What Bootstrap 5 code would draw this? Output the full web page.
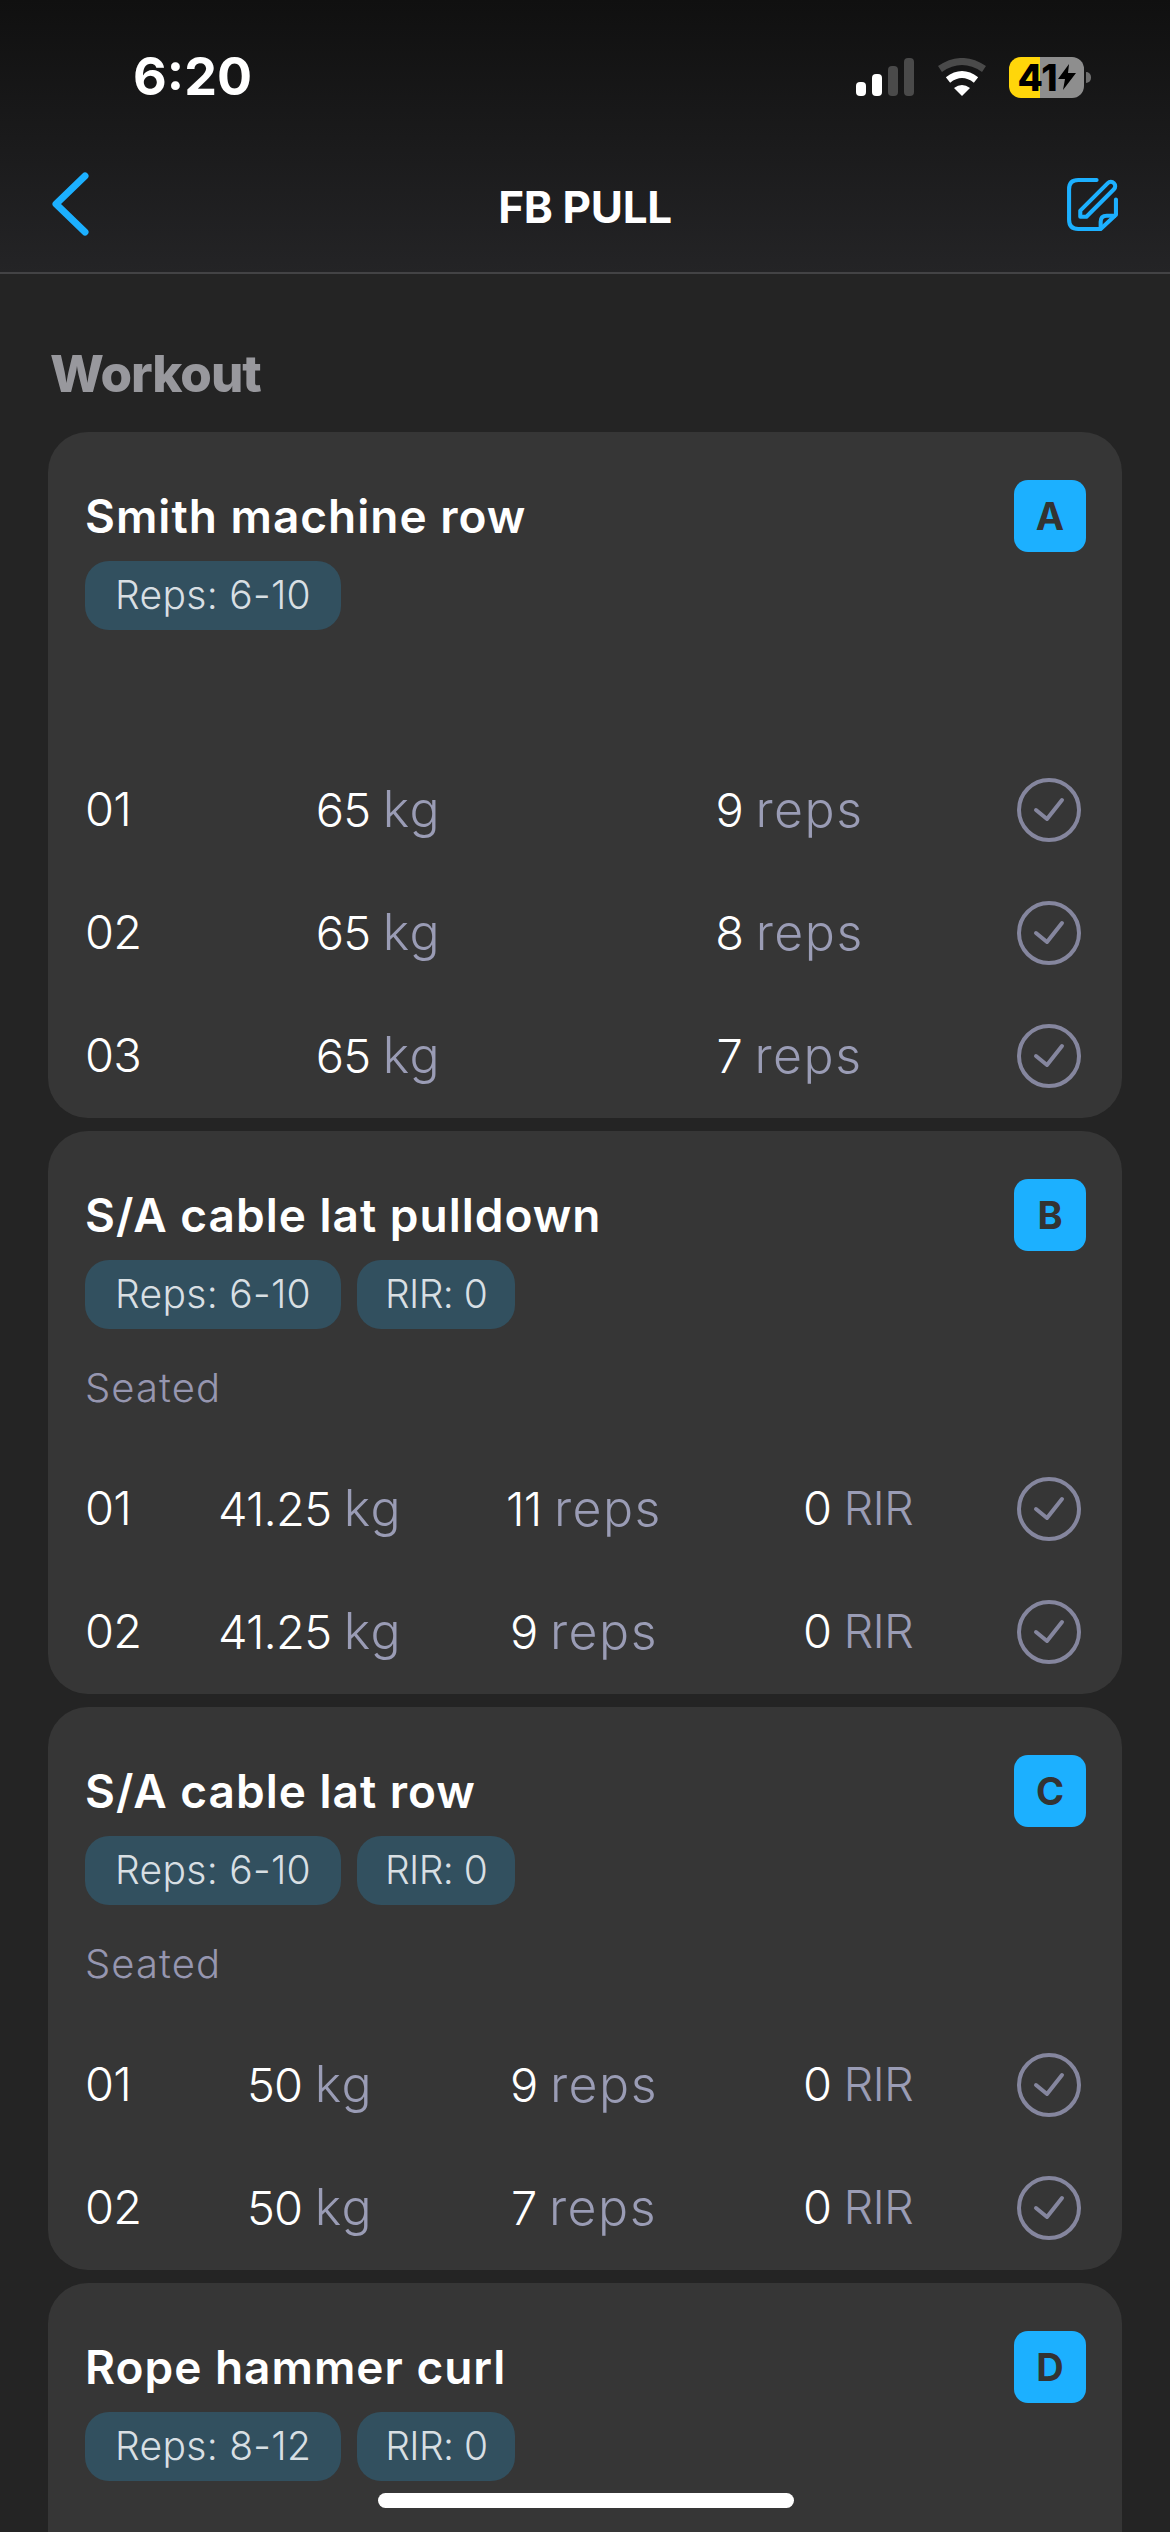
<!DOCTYPE html>
<html lang="en">
<head>
    <meta charset="UTF-8">
    <meta name="viewport" content="width=device-width, initial-scale=1.0">
    <title>FB PULL</title>
    <link href="https://cdn.jsdelivr.net/npm/bootstrap@5.3.0/dist/css/bootstrap.min.css" rel="stylesheet">
    <style>
        html, body {
            height: 2532px;
            overflow: hidden;
        }
        body {
            background-color: #242424;
            font-family: "Inter", "Liberation Sans", sans-serif;
            color: #fff;
        }
        .top-area {
            background: linear-gradient(180deg, #101010 0%, #242426 100%);
        }
        .status-row {
            height: 154px;
            padding: 0 79px 0 133px;
        }
        .clock {
            font-size: 52px;
            font-weight: 700;
            line-height: 1;
        }
        .wifi-icon {
            margin: 0 22px 0 23px;
        }
        .batt {
            width: 75px;
            height: 41px;
            border-radius: 12px;
            background: linear-gradient(90deg, #ffd60a 41%, #8e8e8e 41%);
            color: #000;
            font-size: 37px;
            font-weight: 800;
            line-height: 41px;
        }
        .batt-nub {
            width: 5px;
            height: 11px;
            margin-left: 2px;
            border-radius: 0 5px 5px 0;
            background: #6f6f6f;
        }
        .nav-row {
            height: 120px;
            padding: 0 52px 12px;
            border-bottom: 2px solid #434345;
        }
        .nav-side {
            width: 52px;
            margin-bottom: 6px;
        }
        .nav-title {
            font-size: 44px;
            font-weight: 700;
            letter-spacing: -0.3px;
        }
        .section-head {
            color: #98989d;
            font-size: 51px;
            font-weight: 800;
            letter-spacing: -1px;
            line-height: 116px;
            height: 158px;
            padding: 42px 0 0 50px;
            margin: 0;
        }
        .workout-list {
            padding: 0 48px;
            gap: 13px;
        }
        .lift-card {
            background: #363636;
            border: 0;
            border-radius: 40px;
            color: #fff;
        }
        .lift-body {
            padding: 48px 36px 1px 37px;
        }
        .lift-name {
            font-size: 46px;
            font-weight: 600;
            letter-spacing: 1px;
            line-height: 72px;
            margin: 0;
        }
        .letter-tile {
            width: 72px;
            height: 72px;
            border-radius: 14px;
            background: #1cb0ff;
            color: #333;
            font-size: 38px;
            font-weight: 700;
        }
        .tag-row {
            gap: 16px;
            margin-top: 9px;
        }
        .tag-chip {
            height: 69px;
            padding: 0 30px;
            border-radius: 24px;
            background: #32505f;
            color: #d8dfe3;
            font-size: 39px;
            font-weight: 300;
            letter-spacing: 0.3px;
        }
        .chip-short {
            padding: 0 28px;
            letter-spacing: -0.6px;
        }
        .lift-note {
            height: 118px;
            color: #9696b0;
            font-size: 40px;
            font-weight: 300;
            letter-spacing: 1.1px;
        }
        .set-row {
            height: 123px;
            font-size: 47px;
            font-weight: 300;
            letter-spacing: -0.8px;
        }
        .set-num {
            width: 88px;
        }
        .set-val {
            flex: 1 1 0;
            text-align: center;
        }
        .set-unit {
            color: #9a9cb5;
        }
        .unit-lower {
            font-size: 50px;
            letter-spacing: 1.5px;
        }
        .set-check {
            width: 91px;
            padding-right: 5px;
        }
        .home-bar {
            position: fixed;
            left: 378px;
            top: 2493px;
            width: 416px;
            height: 15px;
            border-radius: 8px;
            background: #fff;
        }
    </style>
</head>
<body>
    <svg class="d-none">
        <symbol id="check-ring" viewBox="0 0 64 64">
            <circle cx="32" cy="32" r="30" fill="none" stroke="#85869e" stroke-width="4"/>
            <path d="M19 32 L30 41 L45 22" fill="none" stroke="#85869e" stroke-width="4" stroke-linecap="round" stroke-linejoin="round"/>
        </symbol>
    </svg>

    <div class="top-area">
        <div class="status-row d-flex justify-content-between align-items-center">
            <div class="clock">6:20</div>
            <div class="d-flex align-items-center">
                <svg width="58" height="38" viewBox="0 0 58 38">
                    <rect x="0" y="24" width="10" height="14" rx="4" fill="#fff"/>
                    <rect x="16" y="16" width="10" height="22" rx="4" fill="#fff"/>
                    <rect x="32" y="8" width="10" height="30" rx="4" fill="#4a4a4a"/>
                    <rect x="48" y="0" width="10" height="38" rx="4" fill="#4a4a4a"/>
                </svg>
                <svg class="wifi-icon" width="50" height="38" viewBox="0 0 50 38">
                    <path d="M3 11 Q25 -4 47 11" fill="none" stroke="#4a4a4a" stroke-width="7"/>
                    <path d="M11 22 Q25 11 39 22" fill="none" stroke="#fff" stroke-width="7"/>
                    <path d="M17 30 Q25 24 33 30 L25 38 Z" fill="#fff"/>
                </svg>
                <div class="batt d-flex align-items-center justify-content-center">
                    41<svg width="18" height="26" viewBox="0 0 18 26"><path d="M11 0 L0 15 H7 L5 26 L18 9 H10 Z" fill="#000"/></svg>
                </div>
                <div class="batt-nub"></div>
            </div>
        </div>
        <div class="nav-row d-flex justify-content-between align-items-center">
            <div class="nav-side">
                <svg class="d-block" width="38" height="64" viewBox="0 0 38 64">
                    <path d="M33 4 L4 32 L33 60" fill="none" stroke="#1cb0ff" stroke-width="7" stroke-linecap="round" stroke-linejoin="round"/>
                </svg>
            </div>
            <div class="nav-title">FB PULL</div>
            <div class="nav-side">
                <svg class="d-block" width="52" height="54" viewBox="0 0 51 53">
                    <path d="M30 3 H12 Q3 3 3 12 V42 Q3 51 12 51 H34 L49 37 V22" fill="none" stroke="#1cb0ff" stroke-width="4" stroke-linecap="round" stroke-linejoin="round"/>
                    <path d="M34 51 V44 Q34 38 40 38 H49" fill="none" stroke="#1cb0ff" stroke-width="4" stroke-linejoin="round"/>
                    <path d="M14 39 V33 L41 6 A4 4 0 0 1 47 12 L20 39 Z" fill="none" stroke="#1cb0ff" stroke-width="4" stroke-linejoin="round"/>
                </svg>
            </div>
        </div>
    </div>

    <h2 class="section-head">Workout</h2>

    <div class="workout-list d-flex flex-column">
        <div class="card lift-card">
            <div class="lift-body">
                <div class="d-flex justify-content-between">
                    <h3 class="lift-name">Smith machine row</h3>
                    <div class="letter-tile d-flex align-items-center justify-content-center">A</div>
                </div>
                <div class="tag-row d-flex">
                    <span class="tag-chip d-flex align-items-center">Reps: 6-10</span>
                </div>
                <div class="lift-note d-flex align-items-center"></div>
                <div class="set-row d-flex align-items-center">
                    <div class="set-num">01</div>
                    <div class="set-val">65 <span class="set-unit unit-lower">kg</span></div>
                    <div class="set-val">9 <span class="set-unit unit-lower">reps</span></div>
                    <div class="set-check d-flex justify-content-end"><svg width="64" height="64"><use href="#check-ring"/></svg></div>
                </div>
                <div class="set-row d-flex align-items-center">
                    <div class="set-num">02</div>
                    <div class="set-val">65 <span class="set-unit unit-lower">kg</span></div>
                    <div class="set-val">8 <span class="set-unit unit-lower">reps</span></div>
                    <div class="set-check d-flex justify-content-end"><svg width="64" height="64"><use href="#check-ring"/></svg></div>
                </div>
                <div class="set-row d-flex align-items-center">
                    <div class="set-num">03</div>
                    <div class="set-val">65 <span class="set-unit unit-lower">kg</span></div>
                    <div class="set-val">7 <span class="set-unit unit-lower">reps</span></div>
                    <div class="set-check d-flex justify-content-end"><svg width="64" height="64"><use href="#check-ring"/></svg></div>
                </div>
            </div>
        </div>

        <div class="card lift-card">
            <div class="lift-body">
                <div class="d-flex justify-content-between">
                    <h3 class="lift-name">S/A cable lat pulldown</h3>
                    <div class="letter-tile d-flex align-items-center justify-content-center">B</div>
                </div>
                <div class="tag-row d-flex">
                    <span class="tag-chip d-flex align-items-center">Reps: 6-10</span>
                    <span class="tag-chip chip-short d-flex align-items-center">RIR: 0</span>
                </div>
                <div class="lift-note d-flex align-items-center">Seated</div>
                <div class="set-row d-flex align-items-center">
                    <div class="set-num">01</div>
                    <div class="set-val">41.25 <span class="set-unit unit-lower">kg</span></div>
                    <div class="set-val">11 <span class="set-unit unit-lower">reps</span></div>
                    <div class="set-val">0 <span class="set-unit">RIR</span></div>
                    <div class="set-check d-flex justify-content-end"><svg width="64" height="64"><use href="#check-ring"/></svg></div>
                </div>
                <div class="set-row d-flex align-items-center">
                    <div class="set-num">02</div>
                    <div class="set-val">41.25 <span class="set-unit unit-lower">kg</span></div>
                    <div class="set-val">9 <span class="set-unit unit-lower">reps</span></div>
                    <div class="set-val">0 <span class="set-unit">RIR</span></div>
                    <div class="set-check d-flex justify-content-end"><svg width="64" height="64"><use href="#check-ring"/></svg></div>
                </div>
            </div>
        </div>

        <div class="card lift-card">
            <div class="lift-body">
                <div class="d-flex justify-content-between">
                    <h3 class="lift-name">S/A cable lat row</h3>
                    <div class="letter-tile d-flex align-items-center justify-content-center">C</div>
                </div>
                <div class="tag-row d-flex">
                    <span class="tag-chip d-flex align-items-center">Reps: 6-10</span>
                    <span class="tag-chip chip-short d-flex align-items-center">RIR: 0</span>
                </div>
                <div class="lift-note d-flex align-items-center">Seated</div>
                <div class="set-row d-flex align-items-center">
                    <div class="set-num">01</div>
                    <div class="set-val">50 <span class="set-unit unit-lower">kg</span></div>
                    <div class="set-val">9 <span class="set-unit unit-lower">reps</span></div>
                    <div class="set-val">0 <span class="set-unit">RIR</span></div>
                    <div class="set-check d-flex justify-content-end"><svg width="64" height="64"><use href="#check-ring"/></svg></div>
                </div>
                <div class="set-row d-flex align-items-center">
                    <div class="set-num">02</div>
                    <div class="set-val">50 <span class="set-unit unit-lower">kg</span></div>
                    <div class="set-val">7 <span class="set-unit unit-lower">reps</span></div>
                    <div class="set-val">0 <span class="set-unit">RIR</span></div>
                    <div class="set-check d-flex justify-content-end"><svg width="64" height="64"><use href="#check-ring"/></svg></div>
                </div>
            </div>
        </div>

        <div class="card lift-card">
            <div class="lift-body">
                <div class="d-flex justify-content-between">
                    <h3 class="lift-name">Rope hammer curl</h3>
                    <div class="letter-tile d-flex align-items-center justify-content-center">D</div>
                </div>
                <div class="tag-row d-flex">
                    <span class="tag-chip d-flex align-items-center">Reps: 8-12</span>
                    <span class="tag-chip chip-short d-flex align-items-center">RIR: 0</span>
                </div>
                <div class="lift-note d-flex align-items-center"></div>
            </div>
        </div>
    </div>

    <div class="home-bar"></div>

    <script src="https://cdn.jsdelivr.net/npm/bootstrap@5.3.0/dist/js/bootstrap.bundle.min.js"></script>
</body>
</html>
